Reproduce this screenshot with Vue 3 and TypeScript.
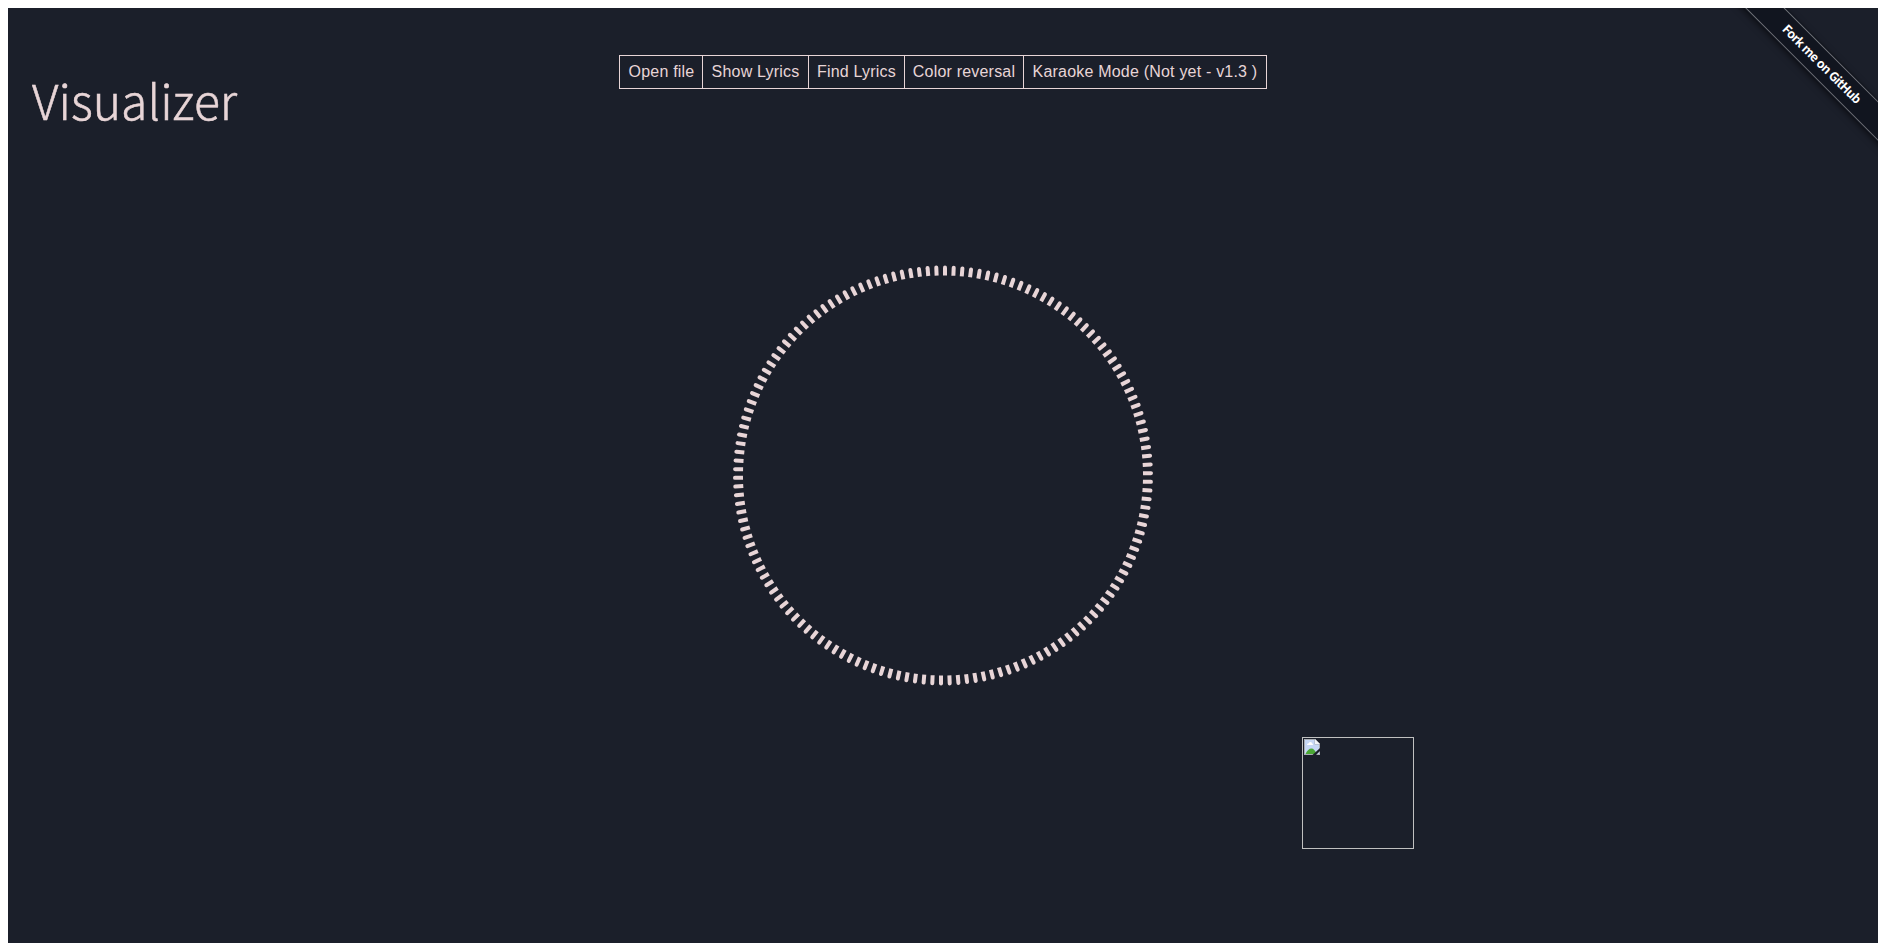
<script setup lang="ts">
const actions: string[] = [
  'Open file',
  'Show Lyrics',
  'Find Lyrics',
  'Color reversal',
  'Karaoke Mode (Not yet - v1.3 )',
]

const barCount = 150
const bars: number[] = Array.from({ length: barCount }, (_, i) => (i * 360) / barCount)
</script>

<template>
  <main class="stage">
    <h1 class="title">Visualizer</h1>

    <nav class="toolbar">
      <button v-for="label in actions" :key="label" class="action" type="button">{{ label }}</button>
    </nav>

    <svg class="ring" width="422" height="422" viewBox="-211 -211.5 422 422" aria-hidden="true">
      <path
        v-for="angle in bars"
        :key="angle"
        d="M0-200V-208Q0-210 2-210Q4-210 4-208V-200Z"
        :transform="`rotate(${angle})`"
      />
    </svg>

    <div class="cover">
      <svg width="16" height="16" viewBox="0 0 16 16" aria-hidden="true">
        <path d="M0 0H11L16 5V16H0Z" fill="#a9adb3" />
        <path d="M1 1H10.5V5.5H15V15H1Z" fill="#c6d7f5" />
        <path d="M3 6Q3 4.3 4.7 4.3Q5.2 3 6.5 3Q8 3 8.3 4.5Q9 4.7 9 6Z" fill="#fff" />
        <path d="M1.5 15Q4 9.5 7.5 9.5Q10.5 9.5 12.5 15Z" fill="#4ba836" />
        <path d="M11 0L16 5H11Z" fill="#f3f5f8" />
        <path d="M16 9L8.5 16H12L16 12Z" fill="#1b1f2a" />
      </svg>
    </div>

    <a class="ribbon"><span>Fork me on GitHub</span></a>
  </main>
</template>

<style>
body {
  margin: 0;
  background: #fff;
}
</style>

<style scoped>
.stage {
  position: relative;
  height: 935px;
  margin: 8px 0 8px 8px;
  overflow: hidden;
  background: #1b1f2a;
  color: #e8d5d7;
  font-family: "Liberation Sans", Arial, sans-serif;
}

.title {
  position: absolute;
  left: 24px;
  top: 53px;
  margin: 0;
  font: 300 48.2px/76px "Noto Sans CJK SC", sans-serif;
  -webkit-text-stroke: 0.5px #e8d5d7;
}

.toolbar {
  display: grid;
  grid-template-columns: 83px 106px 96px 119px 242px;
  width: 648px;
  height: 34px;
  box-sizing: border-box;
  margin: 47px 0 0 611px;
  border: 1px solid #e8d5d7;
}

.action {
  padding: 0;
  border: 0;
  border-right: 1px solid #e8d5d7;
  background: none;
  color: inherit;
  font: 16px/32px "Liberation Sans", Arial, sans-serif;
  letter-spacing: 0.2px;
  white-space: nowrap;
}

.action:first-child {
  padding-left: 1px;
}

.action:last-child {
  border-right: 0;
}

.ring {
  position: absolute;
  left: 724px;
  top: 256px;
  fill: #e8d5d7;
}

.cover {
  position: absolute;
  left: 1294px;
  top: 729px;
  width: 112px;
  height: 112px;
  box-sizing: border-box;
  padding: 1px;
  border: 1px solid #c0c0c0;
}

.cover svg {
  display: block;
}

.ribbon {
  position: absolute;
  left: 1693px;
  top: 41px;
  width: 240px;
  height: 30px;
  box-sizing: border-box;
  padding: 1px 0;
  background: #11151f;
  box-shadow: 0 2px 6px rgba(0, 0, 0, 0.5);
  transform: rotate(45deg);
}

.ribbon span {
  display: block;
  height: 28px;
  box-sizing: border-box;
  border: solid rgba(255, 255, 255, 0.4);
  border-width: 1px 0;
  padding-left: 1px;
  color: #fff;
  font: 700 12.3px/25px "Noto Sans CJK SC", sans-serif;
  letter-spacing: -0.55px;
  word-spacing: 0.4px;
  text-align: center;
}
</style>
